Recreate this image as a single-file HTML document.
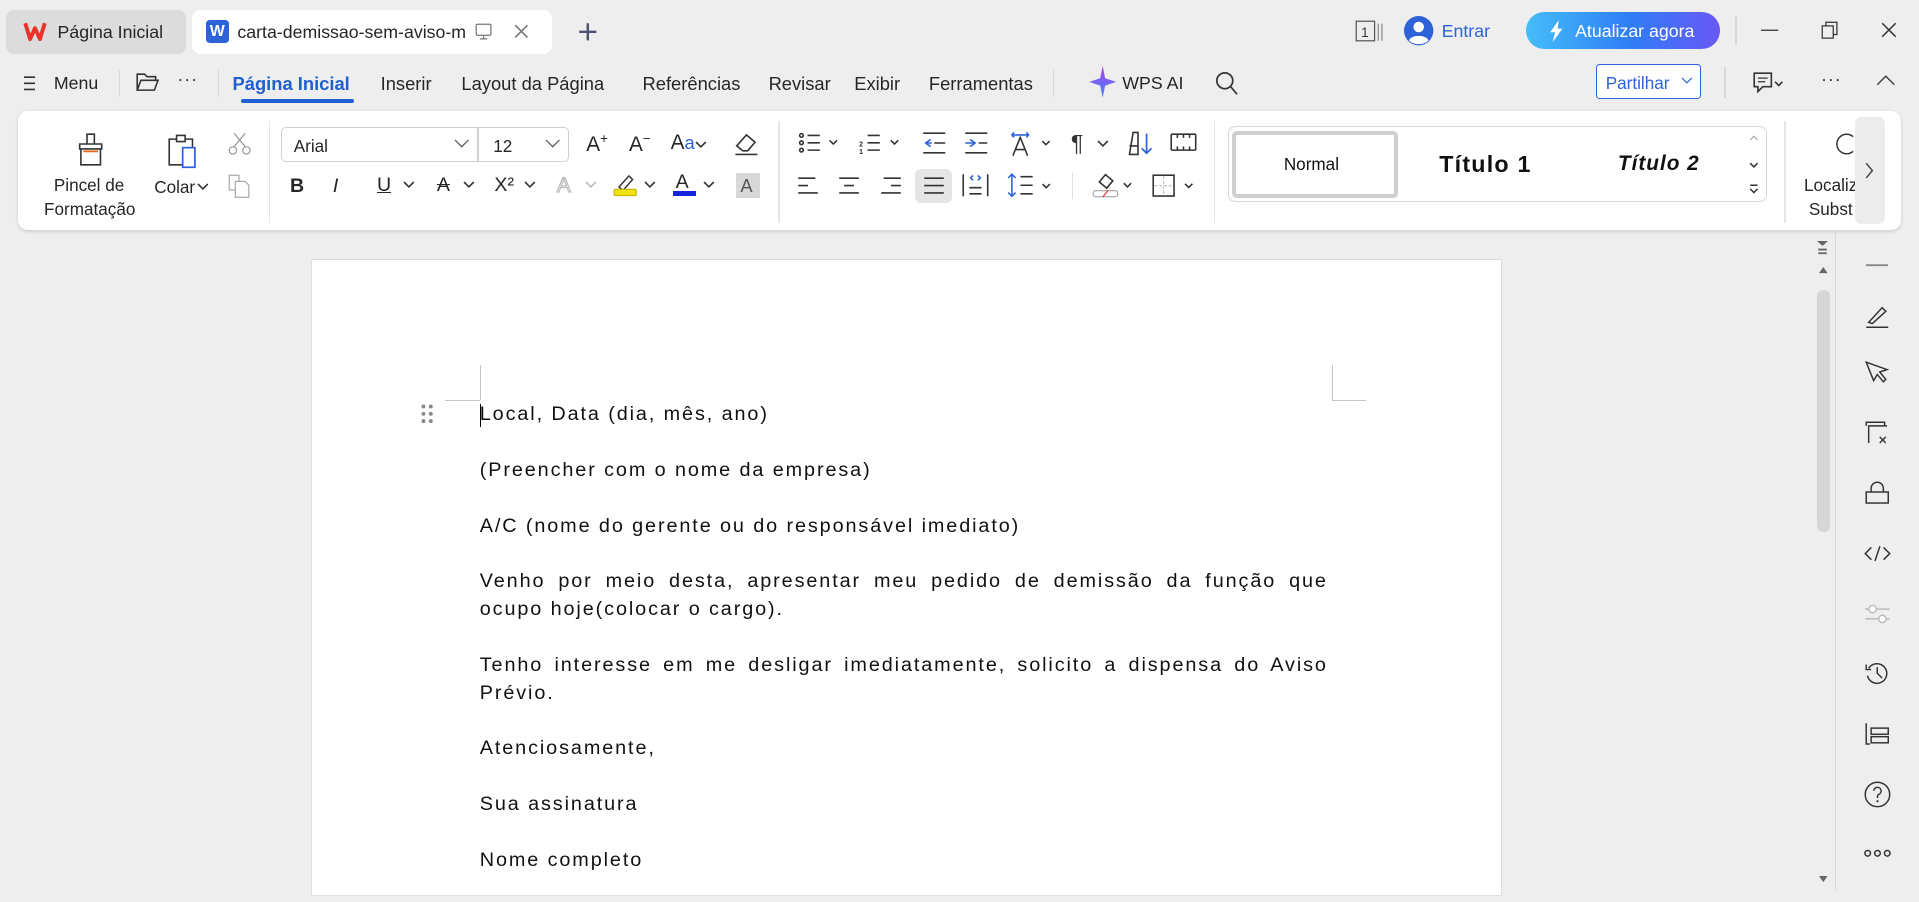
<!DOCTYPE html>
<html><head><meta charset="utf-8">
<style>
html{zoom:1.22385}
*{box-sizing:border-box;margin:0;padding:0}
body{width:1568px;height:727px;overflow:hidden;background:#eeeeee;font-family:"Liberation Sans",Arial,sans-serif;color:#222;position:relative}
.a{position:absolute}
.t{position:absolute;font-size:14px;color:#262626;white-space:nowrap}
svg{position:absolute;overflow:visible}
.sep{position:absolute;width:1px;background:#d8d8d8}
.doc p{font-size:16.2px;letter-spacing:1.55px;line-height:22.7px;color:#111;margin-bottom:22.8px;text-align:justify}
</style></head><body>

<!-- Tabs -->
<div class="a" style="left:5px;top:8px;width:147px;height:36px;background:#dcdcdc;border-radius:7px"></div>
<svg style="left:20px;top:18px" width="18" height="15" viewBox="0 0 18 15"><path d="M1 1 L5 14 L9 5 L13 14 L17 1" fill="none" stroke="#e8332c" stroke-width="3.2" stroke-linejoin="round"/></svg>
<div class="t" style="left:47px;top:18px;font-size:14.5px">Página Inicial</div>
<div class="a" style="left:157px;top:8px;width:294px;height:36px;background:#fff;border-radius:7px"></div>
<div class="a" style="left:168px;top:16px;width:19px;height:19px;background:#2e62d9;border-radius:3px;color:#fff;font-weight:bold;font-size:13px;text-align:center;line-height:19px">W</div>
<div class="t" style="left:194px;top:18px;font-size:14.5px;width:188px;overflow:hidden">carta-demissao-sem-aviso-m</div>
<svg style="left:388px;top:19px" width="14" height="14"><rect x="1" y="1" width="12" height="9" rx="1" fill="none" stroke="#777"/><path d="M7 10v3M4 13h6" stroke="#777"/></svg>
<svg style="left:420px;top:20px" width="12" height="12"><path d="M1 1l10 10M11 1L1 11" stroke="#777" stroke-width="1.3"/></svg>
<svg style="left:472px;top:18px" width="16" height="16"><path d="M8 1v14M1 8h14" stroke="#4a5470" stroke-width="2"/></svg>

<!-- top right -->
<svg style="left:1107px;top:16px" width="24" height="18"><rect x="1" y="1" width="15" height="16" fill="none" stroke="#555"/><text x="5" y="14" font-size="11" font-family="Liberation Sans" fill="#333">1</text><path d="M19 3v14M22 3v14" stroke="#888"/></svg>
<svg style="left:1147px;top:13px" width="24" height="24"><circle cx="12" cy="12" r="12" fill="#2e62d9"/><circle cx="12" cy="9" r="4.3" fill="#fff"/><path d="M4 20c2-5 14-5 16 0c-4 4-12 4-16 0z" fill="#fff"/></svg>
<div class="t" style="left:1178px;top:17px;color:#2e62d9;font-size:14.5px">Entrar</div>
<div class="a" style="left:1247px;top:10px;width:158px;height:30px;border-radius:15px;background:linear-gradient(90deg,#45bdf8,#2f7cf6 55%,#6a58f5)"></div>
<svg style="left:1266px;top:16px" width="12" height="18"><path d="M8 0L1 10h4l-2 8l8-11H7z" fill="#fff"/></svg>
<div class="t" style="left:1287px;top:17px;color:#fff;font-size:14.5px">Atualizar agora</div>
<div class="sep" style="left:1418px;top:13px;height:24px"></div>
<svg style="left:1439px;top:24px" width="14" height="2"><path d="M0 1h14" stroke="#333"/></svg>
<svg style="left:1488px;top:17px" width="14" height="15"><rect x="1" y="4" width="9" height="10" fill="none" stroke="#333"/><path d="M4 4V1h9v10h-3" fill="none" stroke="#333"/></svg>
<svg style="left:1537px;top:18px" width="13" height="13"><path d="M1 1l11 11M12 1L1 12" stroke="#333" stroke-width="1.2"/></svg>

<!-- Menu row -->
<svg style="left:20px;top:62px" width="11" height="12"><path d="M0 1h9M0 6h9M0 11h9" stroke="#333" stroke-width="1.3"/></svg>
<div class="t" style="left:44px;top:60px;font-size:14.5px">Menu</div>
<div class="sep" style="left:97px;top:57px;height:22px"></div>
<svg style="left:111px;top:60px" width="19" height="15"><path d="M1 14V1h6l2 2h7v3M1 14l3-8h14l-3 8z" fill="none" stroke="#333" stroke-width="1.3"/></svg>
<div class="t" style="left:145px;top:56px;font-size:14px;letter-spacing:1px">···</div>
<div class="sep" style="left:178px;top:57px;height:22px"></div>
<div class="t" style="left:190px;top:60px;font-size:15px;font-weight:bold;color:#1f5fcf">Página Inicial</div>
<div class="a" style="left:197px;top:81px;width:92px;height:3px;border-radius:2px;background:#1f5fcf"></div>
<div class="t" style="left:311px;top:60px;font-size:15px">Inserir</div>
<div class="t" style="left:377px;top:60px;font-size:15px">Layout da Página</div>
<div class="t" style="left:525px;top:60px;font-size:15px">Referências</div>
<div class="t" style="left:628px;top:60px;font-size:15px">Revisar</div>
<div class="t" style="left:698px;top:60px;font-size:15px">Exibir</div>
<div class="t" style="left:759px;top:60px;font-size:15px">Ferramentas</div>
<div class="sep" style="left:860px;top:57px;height:22px"></div>
<svg style="left:889px;top:54px" width="24" height="26" viewBox="0 0 24 26"><defs><linearGradient id="g" x1="0" y1="0" x2="0" y2="1"><stop offset="0" stop-color="#b23cf0"/><stop offset="1" stop-color="#3a8cf6"/></linearGradient></defs><path d="M12 0 L14 10 L23 13 L14 16 L12 26 L10 16 L1 13 L10 10Z" fill="url(#g)"/></svg>
<div class="t" style="left:917px;top:60px;font-size:14.5px">WPS AI</div>
<svg style="left:993px;top:58px" width="20" height="20"><circle cx="8" cy="8" r="6.5" fill="none" stroke="#333" stroke-width="1.4"/><path d="M13 13l5 6" stroke="#333" stroke-width="1.4"/></svg>
<div class="a" style="left:1304px;top:52px;width:86px;height:29px;border:1px solid #2e62d9;border-radius:3px;background:#fff"></div>
<div class="t" style="left:1312px;top:60px;font-size:14px;color:#2e62d9">Partilhar</div>
<svg style="left:1374px;top:64px" width="8" height="5"><path d="M0 0l4 4l4-4" fill="none" stroke="#2e62d9"/></svg>
<div class="sep" style="left:1409px;top:55px;height:25px"></div>
<svg style="left:1432px;top:59px" width="26" height="20"><path d="M1 1h14v11H8l-4 4v-4H1z" fill="none" stroke="#333" stroke-width="1.3"/><path d="M4 5h8M4 8h6" stroke="#333"/><path d="M18 8l3 3l3-3" fill="none" stroke="#333" stroke-width="1.3"/></svg>
<div class="t" style="left:1488px;top:56px;font-size:14px;letter-spacing:1px">···</div>
<svg style="left:1533px;top:61px" width="16" height="9"><path d="M1 8l7-7l7 7" fill="none" stroke="#444" stroke-width="1.2"/></svg>

<!-- Ribbon -->
<div class="a" style="left:15px;top:91px;width:1538px;height:97px;background:#fff;border-radius:8px;box-shadow:0 1px 3px rgba(0,0,0,.15)"></div>
<svg style="left:62px;top:109px" width="24" height="27"><path d="M9 1h6v8h-6z M3 9h18v4H3z M4 13h16v13H4z" fill="none" stroke="#333" stroke-width="1.3"/><path d="M6 15h12" stroke="#e26a1d" stroke-width="1.5"/></svg>
<div class="t" style="left:44px;top:143px;font-size:14px">Pincel de</div>
<div class="t" style="left:36px;top:163px;font-size:14px">Formatação</div>
<svg style="left:137px;top:109px" width="26" height="28"><path d="M1 5h19v21H1z" fill="none" stroke="#333" stroke-width="1.3"/><path d="M7 2h7v5H7z" fill="#fff" stroke="#333" stroke-width="1.3"/><rect x="12" y="12" width="10" height="16" fill="#fff" stroke="#2e62d9" stroke-width="1.4"/></svg>
<div class="t" style="left:126px;top:145px;font-size:14px">Colar</div>
<svg style="left:162px;top:150px" width="8" height="5"><path d="M0 0l4 4l4-4" fill="none" stroke="#333" stroke-width="1.3"/></svg>
<svg style="left:186px;top:108px" width="19" height="19"><circle cx="4" cy="15" r="3" fill="none" stroke="#999"/><circle cx="15" cy="15" r="3" fill="none" stroke="#999"/><path d="M5 12L14 1M14 12L5 1" stroke="#999"/></svg>
<svg style="left:186px;top:142px" width="20" height="20"><path d="M1 1h8v12H1z" fill="none" stroke="#aaa"/><path d="M6 6h8l3 3v10H6z" fill="#fff" stroke="#aaa"/></svg>
<div class="sep" style="left:220px;top:99px;height:83px;background:#e6e6e6"></div>

<div class="a" style="left:230px;top:104px;width:235px;height:28px;border:1px solid #d0d0d0;border-radius:4px"></div>
<div class="sep" style="left:390px;top:104px;height:28px;background:#d0d0d0"></div>
<div class="t" style="left:240px;top:111px;font-size:14px">Arial</div>
<svg style="left:372px;top:114px" width="11" height="6"><path d="M0 0l5.5 5.5L11 0" fill="none" stroke="#555"/></svg>
<div class="t" style="left:403px;top:111px;font-size:14px">12</div>
<svg style="left:446px;top:114px" width="11" height="6"><path d="M0 0l5.5 5.5L11 0" fill="none" stroke="#555"/></svg>
<div class="t" style="left:479px;top:107px;font-size:17px">A<sup style="font-size:11px">+</sup></div>
<div class="t" style="left:514px;top:107px;font-size:17px">A<sup style="font-size:11px">−</sup></div>
<div class="t" style="left:548px;top:107px;font-size:17px">A<span style="color:#2e62d9;font-size:15px">a</span></div>
<svg style="left:569px;top:116px" width="8" height="5"><path d="M0 0l4 4l4-4" fill="none" stroke="#333" stroke-width="1.3"/></svg>
<svg style="left:599px;top:106px" width="22" height="22"><path d="M3 13l8-9l7 6l-6 7H8z" fill="none" stroke="#333" stroke-width="1.3"/><path d="M2 20h18" stroke="#333" stroke-width="1.3"/></svg>

<div class="t" style="left:237px;top:143px;font-size:16px;font-weight:bold">B</div>
<div class="t" style="left:272px;top:143px;font-size:16px;font-style:italic">I</div>
<div class="t" style="left:308px;top:142px;font-size:16px;text-decoration:underline">U</div>
<div class="t" style="left:357px;top:142px;font-size:16px;text-decoration:line-through">A</div>
<div class="t" style="left:404px;top:142px;font-size:16px">X²</div>
<div class="t" style="left:455px;top:142px;font-size:17px;color:#fff;-webkit-text-stroke:1px #bbb">A</div>
<svg style="left:501px;top:140px" width="20" height="20"><path d="M5 13l8-9l3 3l-8 9z" fill="none" stroke="#333" stroke-width="1.2"/><rect x="1" y="15" width="18" height="5" rx="1" fill="#f2e40c" stroke="#c9b800"/></svg>
<div class="t" style="left:552px;top:140px;font-size:16px">A</div>
<div class="a" style="left:550px;top:156px;width:19px;height:4px;background:#1424d9"></div>
<div class="a" style="left:601px;top:141px;width:20px;height:21px;background:#d8d8d8"></div>
<div class="t" style="left:605px;top:143px;font-size:15px;color:#555">A</div>
<svg style="left:330px;top:149px" width="8" height="5"><path d="M0 0l4 4l4-4" fill="none" stroke="#333" stroke-width="1.3"/></svg>
<svg style="left:379px;top:149px" width="8" height="5"><path d="M0 0l4 4l4-4" fill="none" stroke="#333" stroke-width="1.3"/></svg>
<svg style="left:429px;top:149px" width="8" height="5"><path d="M0 0l4 4l4-4" fill="none" stroke="#333" stroke-width="1.3"/></svg>
<svg style="left:479px;top:149px" width="8" height="5"><path d="M0 0l4 4l4-4" fill="none" stroke="#bbb" stroke-width="1.3"/></svg>
<svg style="left:527px;top:149px" width="8" height="5"><path d="M0 0l4 4l4-4" fill="none" stroke="#333" stroke-width="1.3"/></svg>
<svg style="left:575px;top:149px" width="8" height="5"><path d="M0 0l4 4l4-4" fill="none" stroke="#333" stroke-width="1.3"/></svg>
<div class="sep" style="left:636px;top:99px;height:83px;background:#e6e6e6"></div>

<!-- paragraph group -->
<svg style="left:653px;top:109px" width="40" height="18"><g fill="none" stroke="#333" stroke-width="1.3"><circle cx="2" cy="2" r="1.5"/><circle cx="2" cy="8" r="1.5"/><circle cx="2" cy="14" r="1.5"/><path d="M7 2h10M7 8h10M7 14h10M25 6l3 3l3-3"/></g></svg>
<svg style="left:702px;top:109px" width="40" height="18"><g fill="none" stroke="#333" stroke-width="1.3"><path d="M7 2h10M7 8h10M7 14h10M26 6l3 3l3-3"/></g><text x="0" y="17" font-size="6" font-family="Liberation Sans" font-weight="bold" fill="#333">1</text><text x="0" y="11" font-size="6" font-family="Liberation Sans" font-weight="bold" fill="#333">2</text></svg>
<svg style="left:753px;top:108px" width="20" height="18"><path d="M1 1h18M1 17h18M10 9h9" stroke="#333" stroke-width="1.3"/><path d="M7 6l-4 3l4 3M3 9h5" fill="none" stroke="#2e62d9" stroke-width="1.3"/></svg>
<svg style="left:788px;top:108px" width="20" height="18"><path d="M1 1h18M1 17h18M12 9h7" stroke="#333" stroke-width="1.3"/><path d="M5 6l4 3l-4 3M1 9h8" fill="none" stroke="#2e62d9" stroke-width="1.3"/></svg>
<svg style="left:824px;top:106px" width="38" height="22"><path d="M3 4h14M3 4l2-2M3 4l2 2M17 4l-2-2M17 4l-2 2" fill="none" stroke="#2e62d9" stroke-width="1.3"/><path d="M4 21l6-15l6 15M6 16h8" fill="none" stroke="#333" stroke-width="1.3"/><path d="M28 9l3 3l3-3" fill="none" stroke="#333" stroke-width="1.3"/></svg>
<div class="t" style="left:875px;top:106px;font-size:19px;color:#333">¶</div>
<svg style="left:897px;top:115px" width="8" height="5"><path d="M0 0l4 4l4-4" fill="none" stroke="#333" stroke-width="1.3"/></svg>
<svg style="left:921px;top:106px" width="24" height="22"><path d="M2 20l3-18h4v18zM2 13h7" fill="none" stroke="#333" stroke-width="1.3"/><path d="M16 3v16M12 15l4 4l4-4" fill="none" stroke="#2e62d9" stroke-width="1.4"/></svg>
<svg style="left:956px;top:109px" width="22" height="16"><path d="M1 1h20M1 14h20M1 1v13M21 1v13M6 1v3M11 1v3M16 1v3M6 14v-3M11 14v-3M16 14v-3" fill="none" stroke="#333" stroke-width="1.3"/></svg>

<svg style="left:651px;top:145px" width="18" height="14"><path d="M1 1h14M1 7h8M1 13h16" stroke="#333" stroke-width="1.3"/></svg>
<svg style="left:685px;top:145px" width="18" height="14"><path d="M1 1h16M5 7h8M1 13h16" stroke="#333" stroke-width="1.3"/></svg>
<svg style="left:719px;top:145px" width="18" height="14"><path d="M3 1h14M9 7h8M1 13h16" stroke="#333" stroke-width="1.3"/></svg>
<div class="a" style="left:748px;top:138px;width:30px;height:28px;background:#e5e5e5;border-radius:5px"></div>
<svg style="left:754px;top:145px" width="18" height="14"><path d="M1 1h16M1 7h16M1 13h16" stroke="#333" stroke-width="1.3"/></svg>
<svg style="left:786px;top:141px" width="22" height="20"><path d="M1 1v18M21 1v18M6 12h10M6 17h10" stroke="#333" stroke-width="1.3"/><path d="M9 2l-2 2l2 2M13 2l2 2l-2 2" fill="none" stroke="#2e62d9" stroke-width="1.3"/></svg>
<svg style="left:823px;top:141px" width="38" height="20"><path d="M4 1v18M1 4l3-3l3 3M1 16l3 3l3-3" fill="none" stroke="#2e62d9" stroke-width="1.3"/><path d="M11 3h10M11 10h10M11 17h10M29 9l3 3l3-3" fill="none" stroke="#333" stroke-width="1.3"/></svg>
<div class="sep" style="left:876px;top:141px;height:22px;background:#e0e0e0"></div>
<svg style="left:892px;top:140px" width="38" height="22"><path d="M6 9l5-6l6 5l-5 6z" fill="none" stroke="#333" stroke-width="1.3"/><rect x="1" y="16" width="20" height="5" rx="2" fill="none" stroke="#aaa"/><path d="M9 21l4-5" stroke="#e33"/><path d="M26 10l3 3l3-3" fill="none" stroke="#333" stroke-width="1.3"/></svg>
<svg style="left:941px;top:142px" width="36" height="20"><rect x="1" y="1" width="17" height="17" fill="none" stroke="#333" stroke-width="1.3"/><path d="M9.5 2v15M2 9.5h15" stroke="#bbb" stroke-dasharray="2 2"/><path d="M27 8l3 3l3-3" fill="none" stroke="#333" stroke-width="1.3"/></svg>
<div class="sep" style="left:992px;top:99px;height:83px;background:#e6e6e6"></div>

<!-- styles -->
<div class="a" style="left:1003px;top:103px;width:441px;height:62px;border:1px solid #d6d6d6;border-radius:6px"></div>
<div class="a" style="left:1007px;top:107px;width:135px;height:55px;border:4px solid #cfcfcf;border-radius:4px"></div>
<div class="t" style="left:1049px;top:126px;font-size:14px;color:#111">Normal</div>
<div class="t" style="left:1176px;top:123px;font-size:19px;font-weight:bold;color:#111;letter-spacing:1px">Título 1</div>
<div class="t" style="left:1322px;top:124px;font-size:17px;font-weight:bold;font-style:italic;color:#111;letter-spacing:.8px">Título 2</div>
<svg style="left:1429px;top:110px" width="8" height="5"><path d="M1 4l3-3l3 3" fill="none" stroke="#aaa"/></svg>
<svg style="left:1429px;top:132px" width="8" height="5"><path d="M1 1l3 3l3-3" fill="none" stroke="#333" stroke-width="1.3"/></svg>
<svg style="left:1429px;top:150px" width="8" height="8"><path d="M1 1h6M1 4l3 3l3-3" fill="none" stroke="#333" stroke-width="1.2"/></svg>
<div class="sep" style="left:1458px;top:99px;height:83px;background:#e6e6e6"></div>
<svg style="left:1500px;top:109px" width="16" height="18"><path d="M14 3A8 8 0 1 0 14 15" fill="none" stroke="#333" stroke-width="1.2"/></svg>
<div class="t" style="left:1474px;top:143px;font-size:14px">Localiz</div>
<div class="t" style="left:1478px;top:163px;font-size:14px">Subst</div>
<div class="a" style="left:1516px;top:96px;width:24px;height:87px;background:#ececec;border-radius:5px"></div>
<svg style="left:1524px;top:132px" width="7" height="14"><path d="M1 1l5 6l-5 6" fill="none" stroke="#444" stroke-width="1.2"/></svg>

<!-- document page -->
<div class="a" style="left:254px;top:212px;width:973px;height:520px;background:#fff;border:1px solid #dedede"></div>
<div class="a" style="left:392px;top:298px;width:1px;height:29px;background:#c4c4c4"></div>
<div class="a" style="left:364px;top:327px;width:28px;height:1px;background:#c4c4c4"></div>
<div class="a" style="left:1088px;top:298px;width:1px;height:29px;background:#c4c4c4"></div>
<div class="a" style="left:1088px;top:327px;width:28px;height:1px;background:#c4c4c4"></div>
<svg style="left:344px;top:330px" width="10" height="16"><g fill="#888"><circle cx="2" cy="2" r="1.6"/><circle cx="8" cy="2" r="1.6"/><circle cx="2" cy="8" r="1.6"/><circle cx="8" cy="8" r="1.6"/><circle cx="2" cy="14" r="1.6"/><circle cx="8" cy="14" r="1.6"/></g></svg>
<div class="a" style="left:392px;top:330px;width:1px;height:19px;background:#000"></div>
<div class="a doc" style="left:392px;top:328px;width:693px">
<p>Local, Data (dia, mês, ano)</p>
<p>(Preencher com o nome da empresa)</p>
<p>A/C (nome do gerente ou do responsável imediato)</p>
<p>Venho por meio desta, apresentar meu pedido de demissão da função que ocupo hoje(colocar o cargo).</p>
<p>Tenho interesse em me desligar imediatamente, solicito a dispensa do Aviso Prévio.</p>
<p>Atenciosamente,</p>
<p>Sua assinatura</p>
<p>Nome completo</p>
</div>

<!-- scrollbar -->
<svg style="left:1485px;top:197px" width="9" height="11"><path d="M0 0h9L4.5 4z" fill="#666"/><path d="M1 7h7M1 10h7" stroke="#666" stroke-width="1.5"/></svg>
<svg style="left:1486px;top:218px" width="7" height="5"><path d="M0 5l3.5-5L7 5z" fill="#666"/></svg>
<div class="a" style="left:1485px;top:237px;width:10px;height:198px;background:#d6d6d6;border-radius:5px"></div>
<svg style="left:1486px;top:716px" width="7" height="5"><path d="M0 0l3.5 5L7 0z" fill="#666"/></svg>
<div class="sep" style="left:1499px;top:188px;height:539px;background:#d8d8d8"></div>

<!-- right sidebar icons -->
<svg style="left:1525px;top:216px" width="18" height="2"><path d="M0 1h18" stroke="#888" stroke-width="1.5"/></svg>
<svg style="left:1524px;top:248px" width="20" height="20"><path d="M3 15L14 3l3 3L6 16z M1 19h18" fill="none" stroke="#333" stroke-width="1.2"/></svg>
<svg style="left:1524px;top:295px" width="20" height="20"><path d="M1 1l17 6l-6 2l5 6l-2 2l-5-6l-3 5z" fill="none" stroke="#333" stroke-width="1.2"/></svg>
<svg style="left:1524px;top:344px" width="20" height="20"><path d="M1 4V1h15v3M3 18V4h15" fill="none" stroke="#333" stroke-width="1.2"/><path d="M12 13l5 5M17 13l-5 5" stroke="#333" stroke-width="1.1"/></svg>
<svg style="left:1524px;top:393px" width="20" height="20"><path d="M5 9V6a5 5 0 0 1 10 0v3" fill="none" stroke="#333" stroke-width="1.2"/><rect x="1" y="9" width="18" height="9" fill="none" stroke="#333" stroke-width="1.2"/></svg>
<svg style="left:1523px;top:445px" width="22" height="14"><path d="M6 2L1 7l5 5M16 2l5 5l-5 5M13 1L9 13" fill="none" stroke="#333" stroke-width="1.2"/></svg>
<svg style="left:1523px;top:493px" width="22" height="18"><path d="M1 5h20M1 13h20" stroke="#bbb" stroke-width="1.2"/><circle cx="7" cy="5" r="3" fill="#fff" stroke="#bbb" stroke-width="1.2"/><circle cx="15" cy="13" r="3" fill="#fff" stroke="#bbb" stroke-width="1.2"/></svg>
<svg style="left:1524px;top:540px" width="20" height="20"><path d="M3 6A8 8 0 1 1 2 12" fill="none" stroke="#333" stroke-width="1.2"/><path d="M1 3v4h4M10 5v5l4 4" fill="none" stroke="#333" stroke-width="1.2"/></svg>
<svg style="left:1524px;top:590px" width="20" height="20"><path d="M1 1v17h3" fill="none" stroke="#333" stroke-width="1.2"/><rect x="5" y="5" width="14" height="5" fill="none" stroke="#333" stroke-width="1.2"/><rect x="5" y="12" width="14" height="5" fill="none" stroke="#333" stroke-width="1.2"/></svg>
<svg style="left:1523px;top:638px" width="22" height="22"><circle cx="11" cy="11" r="10" fill="none" stroke="#333" stroke-width="1.2"/><path d="M8 8a3 3 0 1 1 4 3c-1 .5-1 1-1 3" fill="none" stroke="#333" stroke-width="1.2"/><circle cx="11" cy="16.5" r=".9" fill="#333"/></svg>
<svg style="left:1523px;top:694px" width="22" height="7"><g fill="none" stroke="#333" stroke-width="1.2"><circle cx="3" cy="3.5" r="2.3"/><circle cx="11" cy="3.5" r="2.3"/><circle cx="19" cy="3.5" r="2.3"/></g></svg>
</body></html>
